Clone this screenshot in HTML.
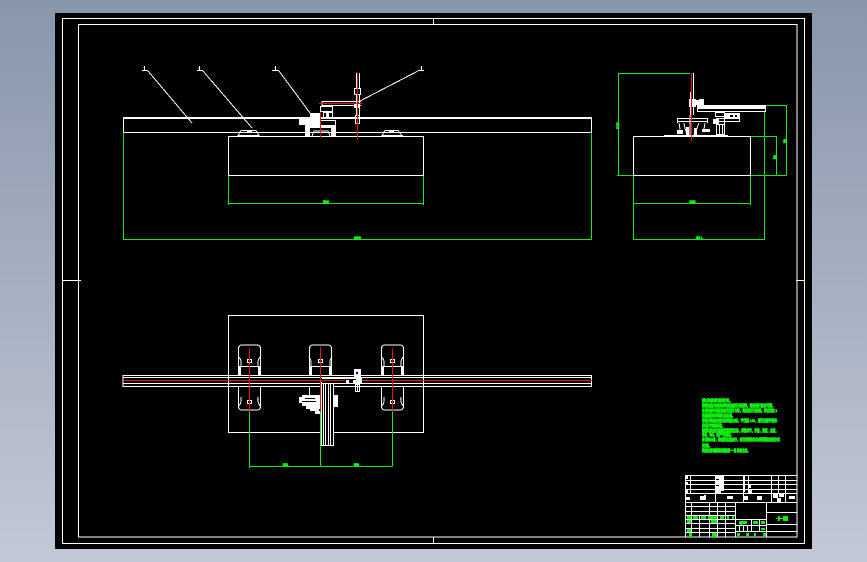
<!DOCTYPE html>
<html lang="zh"><head><meta charset="utf-8"><title>CAD</title>
<style>
html,body{margin:0;padding:0;width:867px;height:562px;overflow:hidden;background:linear-gradient(#8796ab,#c3c8d6)}
svg{position:absolute;left:0;top:0;display:block;shape-rendering:crispEdges}
text{font-family:"Liberation Sans","Noto Sans CJK SC",sans-serif;font-weight:bold}
.w{stroke:#fff;fill:none;stroke-width:1}
.g{stroke:#10ee10;fill:none;stroke-width:1}
.r{stroke:#ee1010;fill:none;stroke-width:1}
.n{font-size:3.8px;fill:#10ee10;stroke:#10ee10;stroke-width:.7}
.t{fill:#fff}
.tg{fill:#10ee10;stroke:#10ee10;stroke-width:.7}
</style></head><body>
<svg width="867" height="562" viewBox="0 0 867 562" xmlns="http://www.w3.org/2000/svg">
<rect x="55" y="13" width="757" height="536" fill="#000"/>
<!-- frames -->
<rect class="w" x="62.5" y="18.5" width="742" height="525"/>
<rect class="w" x="78.5" y="24.5" width="718.5" height="512.5"/>
<path class="w" d="M433.5 18V25M433.5 537V544M62 280.5H81M796 280.5H805"/>

<!-- front view -->
<path class="g" d="M123.5 132V239.5H591.5V132M228.500 176V205M228.500 203.500H423.500M423.500 176V205"/>
<path d="M123 118H592" stroke="#fff" stroke-width="2"/>
<path class="w" d="M123.500 118V132M591.500 118V132M123 132.500H592"/>
<rect class="w" x="228.500" y="136.500" width="195" height="39"/>
<text class="tg" x="323" y="203" font-size="4" textLength="6" lengthAdjust="spacingAndGlyphs">500</text>
<text class="tg" x="354" y="239" font-size="4" textLength="7" lengthAdjust="spacingAndGlyphs">800</text>

<!-- leaders -->
<path class="w" d="M148 71L192 123M203 71L252 128M279 71L310 113M418 71L360 101"/>
<path class="w" d="M142 70.500H148M144.500 66V70M197 70.500H203M199.500 66V70M272 70.500H279M275.500 66V70M418 70.500H424M421.500 66V70"/>
<text class="t" x="143.500" y="69" font-size="3">1</text>
<text class="t" x="198.500" y="69" font-size="3">2</text>
<text class="t" x="274.500" y="69" font-size="3">3</text>
<text class="t" x="420.500" y="69" font-size="3">4</text>

<!-- front pads -->
<path class="w" d="M238 135.500L241 130.500H256L259 135.500ZM382 135.500L385 130.500H398L402 135.500Z"/>
<rect x="247" y="130" width="5" height="2" fill="#fff"/><rect x="389" y="130" width="5" height="2" fill="#fff"/>

<!-- front carriage -->
<rect x="299" y="119" width="21" height="6" fill="#fff"/>
<rect x="310" y="113" width="10" height="6" fill="#fff"/>
<rect x="305" y="125" width="31" height="3" fill="#fff"/>
<path class="w" d="M320 120.500H335.500V125"/>
<rect x="305" y="128" width="5" height="8" fill="#fff"/><rect x="331" y="128" width="5" height="8" fill="#fff"/>
<path class="w" d="M312 136L314 131H328L330 136"/>
<rect class="w" x="320.500" y="106.500" width="12" height="5"/>
<rect class="w" x="323.500" y="112.500" width="9" height="6"/>
<rect x="326" y="113" width="3" height="4" fill="#fff"/>
<path class="w" d="M322 101.500H361M322 105.500H361M322 101V106"/>
<rect class="w" x="354.500" y="88.500" width="6" height="6"/>
<rect x="356" y="90" width="3" height="3" fill="#000"/>
<rect class="w" x="355.500" y="115.500" width="4" height="8"/>
<path class="w" d="M356.500 73V89M359.500 73V89M356.500 95V115M359.500 95V115"/>
<rect x="354" y="103" width="6" height="5" fill="#fff"/>
<path class="r" d="M319 103.500H362M320.500 112V137M357.500 73V139"/>

<!-- side view -->
<path class="g" d="M618.500 73.500H690M618.500 73V176M617 175.500H633M750 175.500H787M786.500 105V176M765 105.500H787M750 136.500H777M776.500 136V176M764.500 111V239.500M633.500 239.500H765M633.500 176V240M633.500 203.500H751M750.500 176V205"/>
<rect class="w" x="633.500" y="136.500" width="117" height="39"/>
<rect x="664" y="135" width="64" height="2" fill="#fff"/>
<rect x="697" y="105" width="69" height="4" fill="#fff"/>
<rect class="w" x="697.500" y="108.500" width="68" height="3"/>
<path class="w" d="M690.500 92V115M693.500 73V115"/>
<rect x="689" y="99" width="7" height="8" fill="#fff"/>
<rect x="696" y="100" width="4" height="5" fill="#fff"/>
<rect x="699" y="99" width="5" height="6" fill="#fff"/>
<path class="w" d="M677.500 118.500H707.500M677.500 121.500H707.500M677.500 118V123M707.500 118V123M690 115V135"/>
<path class="w" d="M679 123L680 129L678 133M684 123L685 128L687 135M699 123L697 128L695 135M705 123L704 129L707 132"/>
<rect x="677" y="130" width="6" height="4" fill="#fff"/>
<rect x="686" y="127" width="3" height="8" fill="#fff"/>
<rect x="694" y="128" width="3" height="7" fill="#fff"/>
<rect x="702" y="129" width="8" height="3" fill="#fff"/>
<rect class="w" x="715.500" y="112.500" width="9" height="4"/>
<rect class="w" x="716.500" y="118.500" width="23" height="3"/>
<rect x="725" y="113" width="15" height="5" fill="#fff"/>
<rect x="730" y="115" width="3" height="2" fill="#000"/><rect x="735" y="115" width="2" height="2" fill="#000"/>
<rect class="w" x="716.500" y="124.500" width="8" height="10"/>
<path class="w" d="M719.500 124V135M722.500 124V135M724.500 112V132"/>
<rect x="713" y="119" width="6" height="5" fill="#fff"/>
<path class="r" d="M691.500 73V141"/>
<text class="tg" font-size="4" transform="translate(619 129) rotate(-90)">900</text>
<text class="tg" font-size="3.500" transform="translate(786 143) rotate(-90)">50</text>
<text class="tg" font-size="3.500" transform="translate(776 159) rotate(-90)">50</text>
<text class="tg" x="689.500" y="203" font-size="3.500" textLength="6" lengthAdjust="spacingAndGlyphs">300</text>
<text class="tg" x="696" y="239" font-size="3.500" textLength="7" lengthAdjust="spacingAndGlyphs">30 L</text>

<!-- plan view -->
<rect class="w" x="228.500" y="315.500" width="195" height="117"/>
<path class="g" d="M249.500 412V468M320.500 412V466M392.500 412V466M249.500 466.500H392.500"/>
<text class="tg" x="283" y="466" font-size="3.500" textLength="5" lengthAdjust="spacingAndGlyphs">50</text>
<text class="tg" x="354" y="466" font-size="3.500" textLength="5" lengthAdjust="spacingAndGlyphs">50</text>
<!-- pads -->
<path class="w" d="M238.500 375V349Q238.500 345 242 345H257Q260.500 345 260.500 349V375"/>
<path class="w" d="M238.500 387V406Q238.500 410 242 410H257Q260.500 410 260.500 406V387"/>
<path class="w" d="M239 357Q242 361 241 366M260 357Q257 361 258 366M239 406Q242 402 241 397M260 406Q257 402 258 397M239 366.500H260"/>
<rect class="w" x="247.500" y="359.500" width="4" height="3"/><rect class="w" x="247.500" y="400.500" width="4" height="3"/>
<path class="w" d="M309.500 375V349Q309.500 345 313 345H328Q331.500 345 331.500 349V375"/>
<path class="w" d="M309 357Q312 361 311 366M332 357Q329 361 330 366M309 366.500H332"/>
<rect class="w" x="318.500" y="359.500" width="4" height="3"/>
<path class="w" d="M309.500 387V395"/>
<path class="w" d="M381.500 375V349Q381.500 345 385 345H400Q403.500 345 403.500 349V375"/>
<path class="w" d="M381.500 387V406Q381.500 410 385 410H400Q403.500 410 403.500 406V387"/>
<path class="w" d="M382 357Q385 361 384 366M403 357Q400 361 401 366M382 406Q385 402 384 397M403 406Q400 402 401 397M382 366.500H403"/>
<rect class="w" x="390.500" y="359.500" width="4" height="3"/><rect class="w" x="390.500" y="400.500" width="4" height="3"/>
<rect x="238" y="367" width="3" height="8" fill="#fff"/><rect x="258" y="367" width="3" height="8" fill="#fff"/>
<rect x="381" y="367" width="3" height="8" fill="#fff"/><rect x="401" y="367" width="3" height="8" fill="#fff"/>
<rect x="309" y="367" width="3" height="8" fill="#fff"/><rect x="329" y="367" width="3" height="8" fill="#fff"/>
<!-- rail -->
<path class="w" d="M123 375.500H592M123 377.500H592M123 383.500H592M123 386.500H592M123 375V387M591.500 375V387"/>
<!-- column -->
<rect x="321" y="382" width="13" height="64" fill="#000"/>
<path class="w" d="M321.500 382V446M323.500 384V446M325.500 384V446M328.500 384V446M330.500 384V446M333.500 384V446M321 445.500H334M321 383.500H334"/>
<rect x="333" y="395" width="5" height="12" fill="#fff"/>
<rect x="322" y="378" width="40" height="5" fill="#000"/>
<path class="w" d="M322 378.500H360M322 383.500H340"/>
<rect x="346" y="380" width="3" height="3" fill="#fff"/><rect x="353" y="380" width="3" height="3" fill="#fff"/>
<!-- torch -->
<rect x="354" y="369" width="7" height="8" fill="#fff"/>
<rect x="356" y="372" width="2" height="2" fill="#000"/>
<rect x="356" y="378" width="6" height="6" fill="#fff"/>
<rect class="w" x="355.500" y="384.500" width="4" height="7"/>
<path class="w" d="M357.500 384V392"/>
<!-- head -->
<rect x="299" y="397" width="6" height="6" fill="#fff"/>
<rect x="302" y="395" width="19" height="11" fill="#fff"/>
<rect x="305" y="398" width="10" height="1" fill="#000"/><rect x="302" y="401" width="14" height="1" fill="#000"/>
<rect x="306" y="406" width="15" height="3" fill="#fff"/>
<rect x="310" y="409" width="9" height="2" fill="#fff"/>
<rect x="315" y="411" width="5" height="3" fill="#fff"/>
<!-- red -->
<path class="r" d="M249.500 348V412M392.500 348V412M320.500 347V412M123 380.500H322M362 380.500H592"/>
<path class="r" d="M322 380.500H345"/>

<!-- title block -->
<rect class="w" x="685.500" y="475.500" width="111.500" height="61.500"/>
<path class="w" d="M685 480.500H797M685 484.500H797M685 489.500H797M685 493.500H797M685 502.500H797"/>
<path class="w" d="M690.500 475V493M715.500 475V502M743.500 475V502M748.500 475V493M771.500 475V502M778.500 475V493M785.500 475V502"/>
<path class="w" d="M685 506.500H735M685 511.500H735M685 515.500H735M685 519.500H735M685 523.500H735M685 528.500H735M685 532.500H735"/>
<path class="w" d="M691.500 502V537M699.500 515V537M709.500 502V537M717.500 502V537M725.500 502V537M735.500 502V537M766.500 502V537"/>
<path class="w" d="M735 519.500H766M735 525.500H766M735 531.500H766M751.500 519V531M759.500 519V531M739.500 525V531M743.500 525V531M747.500 525V531"/>
<path class="w" d="M766 512.500H797M766 524.500H797M766 531.500H797"/>
<g fill="#fff">
<rect x="686" y="482" width="2" height="2"/><rect x="686" y="490" width="2" height="3"/><rect x="686" y="476" width="2" height="3"/>
<rect x="716" y="476" width="4" height="3"/><rect x="719" y="476" width="5" height="15"/><rect x="716" y="481" width="6" height="3"/><rect x="716" y="486" width="5" height="7"/>
<rect x="744" y="476" width="1" height="16"/><rect x="749" y="485" width="2" height="3"/><rect x="749" y="490" width="3" height="3"/>
<rect x="686" y="497" width="4" height="3"/>
<rect x="700" y="496" width="5" height="4"/><rect x="704" y="495" width="2" height="5"/>
<rect x="727" y="496" width="6" height="3"/>
<rect x="744" y="496" width="4" height="4"/>
<rect x="757" y="496" width="5" height="4"/>
<rect x="773" y="494" width="5" height="4"/><rect x="779" y="494" width="5" height="3"/><rect x="777" y="498" width="4" height="4"/>
<rect x="789" y="496" width="6" height="3"/>
</g>
<g fill="#10ee10">
<rect x="687" y="516" width="4" height="3"/><rect x="693" y="516" width="5" height="3"/><rect x="701" y="516" width="5" height="3"/><rect x="708" y="516" width="9" height="3"/><rect x="720" y="516" width="4" height="3"/><rect x="727" y="516" width="2" height="3"/><rect x="732" y="516" width="2" height="3"/>
<rect x="687" y="520" width="4" height="3"/><rect x="711" y="520" width="6" height="3"/>
<rect x="687" y="529" width="4" height="3"/><rect x="689" y="533" width="3" height="4"/>
<rect x="712" y="533" width="5" height="4"/>
<rect x="739" y="521" width="8" height="3"/><rect x="740" y="524" width="2" height="1"/>
<rect x="753" y="521" width="5" height="3"/><rect x="761" y="521" width="4" height="3"/>
<rect x="761" y="528" width="4" height="2"/>
<rect x="737" y="533" width="3" height="3"/><rect x="746" y="533" width="3" height="3"/><rect x="754" y="533" width="2" height="3"/><rect x="763" y="533" width="3" height="3"/>
<rect x="783" y="516" width="5" height="5"/>
<rect x="776" y="518" width="7" height="1"/><rect x="778" y="516" width="2" height="5"/>
</g>

<!-- notes -->
<g class="n">
<text x="702" y="402" textLength="31" lengthAdjust="spacingAndGlyphs">技术要求说明书。</text>
<text x="702" y="407" textLength="73" lengthAdjust="spacingAndGlyphs">焊接设备安装调试完成后进行试运转，确保运行稳定可靠。</text>
<text x="702" y="412" textLength="75" lengthAdjust="spacingAndGlyphs">各运动部件装配后应灵活无卡滞，润滑良好无渗漏，符合规定 2</text>
<text x="702" y="417" textLength="33" lengthAdjust="spacingAndGlyphs">的精度要求和技术标准。</text>
<text x="702" y="422" textLength="75" lengthAdjust="spacingAndGlyphs">导轨安装后应保证直线度公差，平行度 0.05，运行过程平稳无</text>
<text x="702" y="427" textLength="23" lengthAdjust="spacingAndGlyphs">异常冲击振动。</text>
<text x="702" y="432" textLength="76" lengthAdjust="spacingAndGlyphs">焊接机构定位准确重复精度达标，焊枪调节，行程，速度，角度，</text>
<text x="702" y="436" textLength="31" lengthAdjust="spacingAndGlyphs">电流，电压，保护气体流量。</text>
<text x="702" y="441" textLength="78" lengthAdjust="spacingAndGlyphs">未注明公差，按国家标准执行，未注明倒角均为倒钝锐边处理方式</text>
<text x="702" y="447" textLength="10" lengthAdjust="spacingAndGlyphs">处理。</text>
<text x="702" y="452" textLength="48" lengthAdjust="spacingAndGlyphs">表面涂防锈底漆两遍面漆 一遍 验收合格。</text>
</g>
</svg>
</body></html>
